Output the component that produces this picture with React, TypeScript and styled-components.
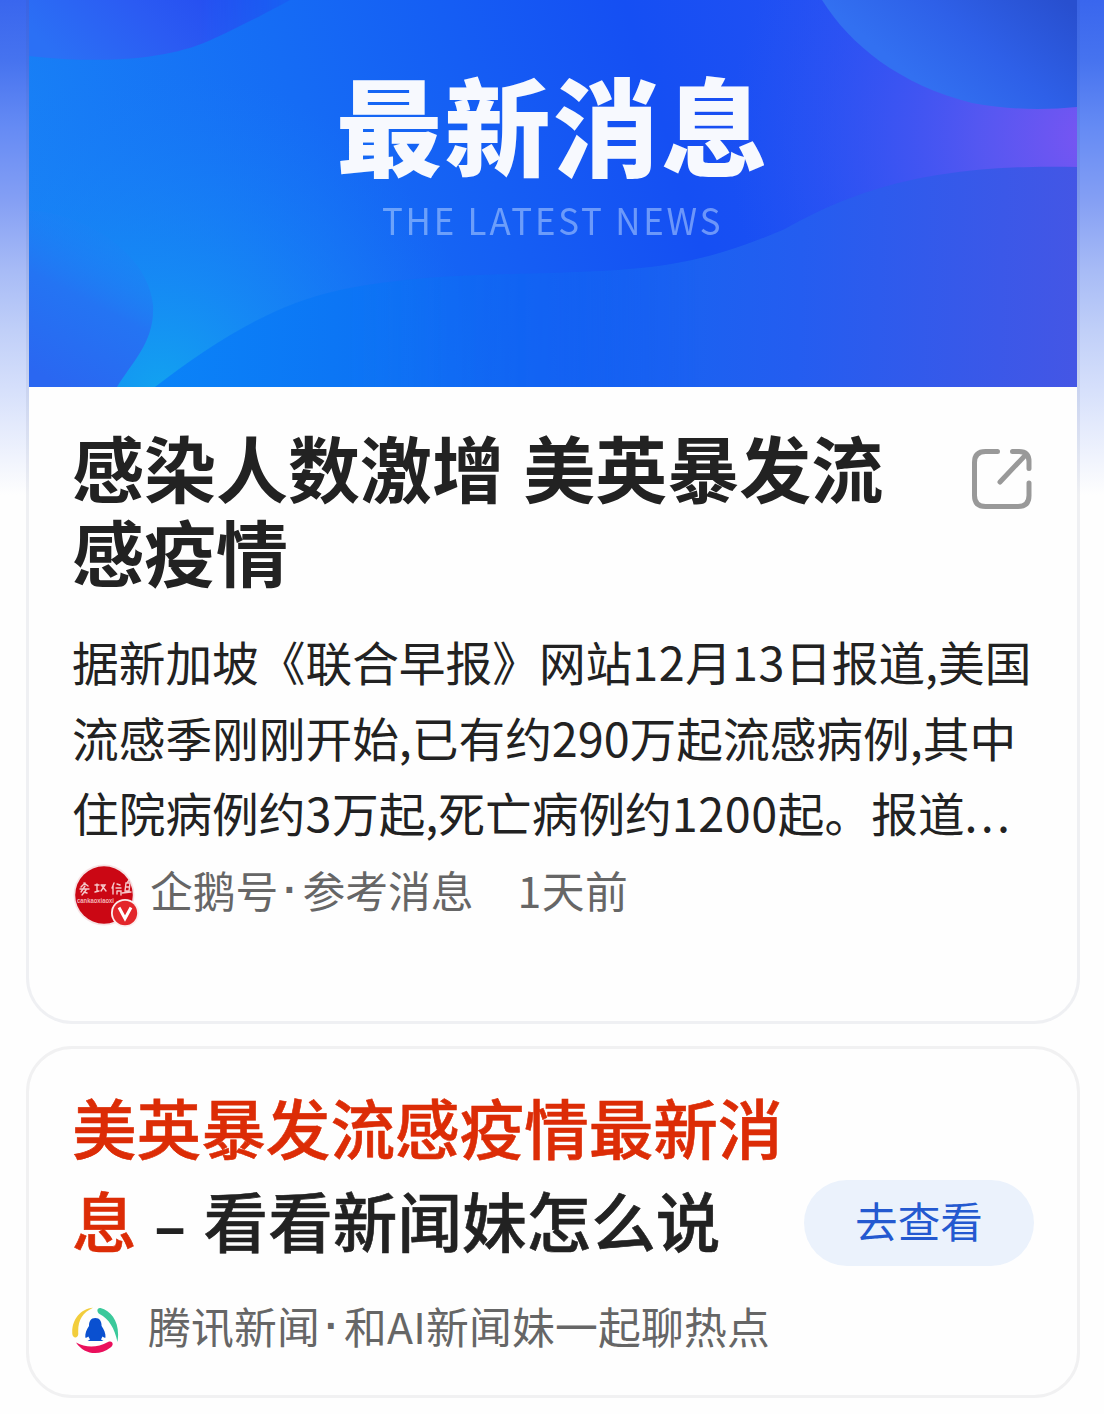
import React from "react";
import styled, { createGlobalStyle } from "styled-components";

const Global = createGlobalStyle`
  * { box-sizing: border-box; }
  html, body { margin: 0; padding: 0; background: #fefefe; }
  body { font-family: "Noto Sans CJK SC", "Noto Sans", sans-serif; color: #222; }
`;

const Page = styled.main`
  width: 1104px;
  height: 1414px;
  overflow: hidden;
  padding: 0 24px 0 26px;
  display: flex;
  flex-direction: column;
  gap: 22px;
  background: linear-gradient(
    180deg,
    #3966ee 0,
    #4673ef 60px,
    #648af4 125px,
    #849ff4 200px,
    #a7bbf6 270px,
    #c0cff8 330px,
    #d5dffb 387px,
    #fefefe 495px
  );
`;

const Card = styled.section<{ $open?: boolean }>`
  flex: none;
  border: 3px solid ${(p) => (p.$open ? "rgba(70, 80, 110, 0.08)" : "#f1f1f2")};
  border-top-width: ${(p) => (p.$open ? 0 : 3)}px;
  border-radius: ${(p) => (p.$open ? "0 0 46px 46px" : "46px")};
  background: #fefefe;
  background-clip: padding-box;
`;

const NewsCard = styled(Card)`
  height: 1024px;
`;

const TopicCard = styled(Card)`
  height: 352px;
  padding: 31px 43px 0 43px;
`;

const Hero = styled.div`
  position: relative;
  height: 387px;
  display: flex;
  flex-direction: column;
  align-items: center;
  overflow: hidden;
`;

const HeroArt = styled.svg`
  position: absolute;
  inset: 0;
`;

const HeroTitle = styled.div`
  position: relative;
  margin-top: 46px;
  height: 153px;
  line-height: 152px;
  font-size: 106px;
  font-weight: 900;
  letter-spacing: 2.5px;
  color: #f7f9fe;
  white-space: nowrap;
`;

const HeroSub = styled.div`
  position: relative;
  height: 42px;
  line-height: 40px;
  font-size: 37px;
  letter-spacing: 3px;
  color: rgba(180, 210, 255, 0.55);
  white-space: nowrap;
  transform: scaleX(0.94);
`;

const Article = styled.div`
  padding: 37px 44px 0 43px;
`;

const Head = styled.div`
  display: flex;
  justify-content: space-between;
`;

const Title = styled.h1`
  margin: 0;
  font-size: 72px;
  line-height: 84px;
  font-weight: 700;
  word-spacing: 3px;
  white-space: nowrap;
`;

const ShareIcon = styled.svg`
  flex: none;
  margin: 25px 1px 0 0;
`;

const Summary = styled.p`
  margin: 31px 0 0;
  font-size: 46.7px;
  line-height: 75.5px;
  white-space: nowrap;
`;

const Digits = styled.span`
  letter-spacing: 0.6px;
`;

const Ellipsis = styled.span`
  letter-spacing: 3.2px;
`;

const Meta = styled.div<{ $top: number; $gap: number }>`
  display: flex;
  align-items: center;
  gap: ${(p) => p.$gap}px;
  height: 64px;
  margin-top: ${(p) => p.$top}px;
  font-size: 42.8px;
  line-height: 64px;
  color: #666;
  white-space: nowrap;

  > svg {
    flex: none;
  }
`;

const Source = styled.span<{ $track?: number }>`
  display: flex;
  letter-spacing: ${(p) => p.$track ?? 0}px;
`;

const Dot = styled.span`
  width: 24px;
  display: flex;
  justify-content: center;
  font-family: "Liberation Sans", sans-serif;
  font-size: 40px;
  font-weight: 700;
  line-height: 67px;
`;

const Time = styled.span`
  margin-left: 44px;
  letter-spacing: 0.4px;
`;

const AvatarArt = styled.svg`
  margin: 14px -1px 0 1px;
`;

const LogoArt = styled.svg`
  margin-top: 9px;
`;

const TopicRow = styled.div`
  display: flex;
  justify-content: space-between;
  align-items: flex-end;
`;

const TopicTitle = styled.h2`
  margin: 0;
  font-size: 64.6px;
  line-height: 93px;
  font-weight: 500;
  -webkit-text-stroke: 0.6px currentColor;
  white-space: nowrap;
`;

const Hit = styled.em`
  font-style: normal;
  color: #dc2c06;
`;

const Dash = styled.span`
  display: inline-block;
  width: 67px;
  text-align: center;
  font-size: 56px;
  line-height: 60px;
  -webkit-text-stroke: 1.6px currentColor;
`;

const Action = styled.button`
  flex: none;
  width: 230px;
  height: 86px;
  padding: 0 0 6px;
  border: 0;
  border-radius: 43px;
  background: #ebf2fc;
  color: #2459d0;
  font: inherit;
  font-size: 42.6px;
  line-height: 80px;
`;

const Banner = () => (
  <HeroArt width="1048" height="387" viewBox="29 0 1048 387">
    <defs>
      <linearGradient id="base" gradientUnits="userSpaceOnUse" x1="29" y1="260" x2="850" y2="0">
        <stop offset="0" stopColor="#1883f6" />
        <stop offset="0.35" stopColor="#156cf5" />
        <stop offset="0.75" stopColor="#154ff3" />
        <stop offset="1" stopColor="#2450f3" />
      </linearGradient>
      <radialGradient id="violet" gradientUnits="userSpaceOnUse" cx="1090" cy="138" r="360">
        <stop offset="0" stopColor="#7955f2" />
        <stop offset="0.3" stopColor="#5b58f1" stopOpacity="0.9" />
        <stop offset="0.65" stopColor="#3c55f2" stopOpacity="0.6" />
        <stop offset="1" stopColor="#2b55f3" stopOpacity="0" />
      </radialGradient>
      <radialGradient id="cyan" gradientUnits="userSpaceOnUse" cx="160" cy="390" r="320">
        <stop offset="0" stopColor="#12a2f0" />
        <stop offset="0.35" stopColor="#158df4" stopOpacity="0.8" />
        <stop offset="1" stopColor="#1878f6" stopOpacity="0" />
      </radialGradient>
      <linearGradient id="wave" gradientUnits="userSpaceOnUse" x1="150" y1="300" x2="1077" y2="330">
        <stop offset="0" stopColor="#0a84f8" />
        <stop offset="0.4" stopColor="#0e68f2" />
        <stop offset="0.7" stopColor="#245df0" />
        <stop offset="1" stopColor="#4456e5" />
      </linearGradient>
      <linearGradient id="orbR" gradientUnits="userSpaceOnUse" x1="940" y1="100" x2="1040" y2="-20">
        <stop offset="0" stopColor="#3270f1" />
        <stop offset="0.45" stopColor="#2e60e8" />
        <stop offset="1" stopColor="#284fcf" />
      </linearGradient>
      <linearGradient id="orbL" gradientUnits="userSpaceOnUse" x1="70" y1="70" x2="200" y2="-60">
        <stop offset="0" stopColor="#2b70f5" />
        <stop offset="0.5" stopColor="#2b5bf3" />
        <stop offset="1" stopColor="#2348ef" />
      </linearGradient>
      <linearGradient id="left" gradientUnits="userSpaceOnUse" x1="50" y1="380" x2="130" y2="225">
        <stop offset="0" stopColor="#2a67f1" />
        <stop offset="0.5" stopColor="#2474f3" />
        <stop offset="1" stopColor="#1b84f6" stopOpacity="0" />
      </linearGradient>
      <linearGradient id="orbFade" gradientUnits="userSpaceOnUse" x1="200" y1="0" x2="285" y2="0">
        <stop offset="0" stopColor="#fff" />
        <stop offset="1" stopColor="#fff" stopOpacity="0.3" />
      </linearGradient>
      <mask id="orbMask">
        <rect x="29" width="300" height="80" fill="url(#orbFade)" />
      </mask>
      <linearGradient id="crest" gradientUnits="userSpaceOnUse" x1="340" y1="0" x2="700" y2="0">
        <stop offset="0" stopColor="#fff" />
        <stop offset="0.3" stopColor="#fff" stopOpacity="0.6" />
        <stop offset="0.6" stopColor="#fff" stopOpacity="0.5" />
        <stop offset="1" stopColor="#fff" />
      </linearGradient>
      <mask id="crestMask">
        <rect x="29" y="150" width="1048" height="237" fill="url(#crest)" />
      </mask>
    </defs>
    <rect x="29" width="1048" height="387" fill="url(#base)" />
    <rect x="29" width="1048" height="387" fill="url(#violet)" />
    <rect x="29" width="1048" height="387" fill="url(#cyan)" />
    <path d="M29 56C110 65 175 58 215 38C245 24 272 10 290 0H29Z" fill="url(#orbL)" mask="url(#orbMask)" />
    <path d="M822 0C850 45 900 85 972 103C1010 110 1045 110 1077 107V0Z" fill="url(#orbR)" />
    <path d="M29 210C90 215 148 255 153 305C155 342 132 362 117 387H29Z" fill="url(#left)" />
    <path d="M155 387C210 345 270 305 340 290C430 272 500 276 600 271C690 267 735 250 785 229C850 192 930 163 1077 167V387Z" fill="url(#wave)" mask="url(#crestMask)" />
  </HeroArt>
);

const Avatar = () => (
  <AvatarArt width="68" height="68" viewBox="0 0 68 68">
    <circle cx="31" cy="31" r="30.5" fill="#f6e3e5" />
    <circle cx="31" cy="31" r="28.8" fill="#cb0714" />
    <g fill="none" stroke="#f5c9cb" strokeWidth="1.4" strokeLinecap="round">
      <path d="M12 19l-4 4M11 19l4 3M7 25h9M12 22l-4 6M13 26l-4 5M11 28l3 1" />
      <path d="M22 21h4M24 20v7M22 28l4-1M28 21h4l-4 6M29 22l4 5" />
      <path d="M41 19l-2 5M40 22v8M44 20l3 1M43 24h5M44 27h4v4M44 27v3" />
      <path d="M56 16l-2 3M53 19h4l-1 8h-4zM53 23h3M49 29l9-1" />
    </g>
    <text x="4" y="38.500" fontSize="7" fontWeight="700" fill="#f3b5b8" textLength="37" lengthAdjust="spacingAndGlyphs" fontFamily="Liberation Sans, sans-serif">
      cankaoxiaoxi
    </text>
    <circle cx="52" cy="49" r="14" fill="#fbeeee" />
    <circle cx="52" cy="49" r="12.2" fill="#e3262a" />
    <path d="M46 43.500l6 11l6-11" fill="none" stroke="#fff" strokeWidth="3" />
  </AvatarArt>
);

const TencentLogo = () => (
  <LogoArt width="48" height="48" viewBox="0 0 48 48">
    <path d="M21 0.800C8 2 -0.500 13 0.300 27C0.800 31.500 6 31.500 6.300 27C5.500 14 10 6 21 0.800Z" fill="#f2cd3c" />
    <path d="M28.500 1C40 4 48.500 16 45.500 35C42.500 21 37 12 27.500 7C23.800 4.500 25.500 0.300 28.500 1Z" fill="#3bc99b" />
    <path d="M4 35.500C14 41 25 41 36 35C40.500 33 42.500 37.500 38.500 40.500C27 49.500 12 47.500 4 35.500Z" fill="#ea0f5c" />
    <path d="M23.300 11C18.800 11 17 14.500 17 19C14.500 22.500 13 26.500 13.300 30.500C14.500 31 15.500 30.500 16.300 29.500L18 32.500L15.500 34H31.500L29 32.500L30.500 29.500C31.500 30.500 32.500 31 33.500 30.500C33.800 26.500 32 22.500 29.600 19C29.600 14.500 27.800 11 23.300 11Z" fill="#0a50d0" />
  </LogoArt>
);

export default function App() {
  return (
    <>
      <Global />
      <Page>
        <NewsCard $open>
          <Hero>
            <Banner />
            <HeroTitle>最新消息</HeroTitle>
            <HeroSub>THE LATEST NEWS</HeroSub>
          </Hero>
          <Article>
            <Head>
              <Title>
                感染人数激增 美英暴发流
                <br />
                感疫情
              </Title>
              <ShareIcon width="60" height="61" viewBox="0 0 60 61" fill="none" stroke="#999" strokeWidth="5" strokeLinecap="round" strokeLinejoin="round">
                <path d="M25.500 2.500H13.500Q2.500 2.500 2.500 13.500V46.500Q2.500 57.500 13.500 57.500H46Q57 57.500 57 46.500V34M40.500 2.500H47Q57 2.500 57 12.500V19.500M54.500 5L28 33" />
              </ShareIcon>
            </Head>
            <Summary>
              据新加坡《联合早报》网站<Digits>12</Digits>月<Digits>13</Digits>日报道,美国
              <br />
              流感季刚刚开始,已有约290万起流感病例,其中
              <br />
              住院病例约<Digits>3</Digits>万起,死亡病例约<Digits>1200</Digits>起。报道<Ellipsis>...</Ellipsis>
            </Summary>
            <Meta $top={9} $gap={10}>
              <Avatar />
              <Source>
                企鹅号<Dot>·</Dot>参考消息<Time>1天前</Time>
              </Source>
            </Meta>
          </Article>
        </NewsCard>
        <TopicCard>
          <TopicRow>
            <TopicTitle>
              <Hit>美英暴发流感疫情最新消</Hit>
              <br />
              <Hit>息</Hit>
              <Dash>–</Dash>看看新闻妹怎么说
            </TopicTitle>
            <Action>去查看</Action>
          </TopicRow>
          <Meta $top={28} $gap={28}>
            <TencentLogo />
            <Source $track={0.2}>
              腾讯新闻<Dot>·</Dot>和AI新闻妹一起聊热点
            </Source>
          </Meta>
        </TopicCard>
      </Page>
    </>
  );
}
